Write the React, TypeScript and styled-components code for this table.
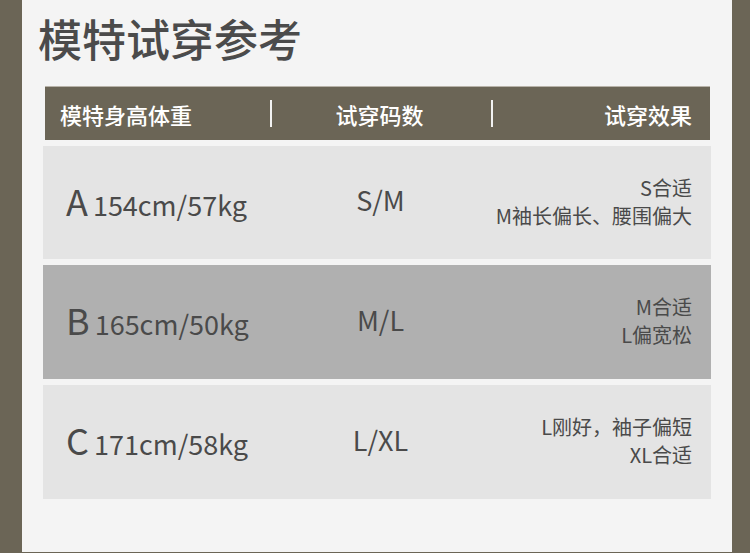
import styled, { createGlobalStyle } from 'styled-components';

// --- Dados da tabela ---
const fitData = [
  { model: 'A', body: '154cm/57kg', size: 'S/M', result: ['S合适', 'M袖长偏长、腰围偏大'], tone: 'light' },
  { model: 'B', body: '165cm/50kg', size: 'M/L', result: ['M合适', 'L偏宽松'], tone: 'dark' },
  { model: 'C', body: '171cm/58kg', size: 'L/XL', result: ['L刚好，袖子偏短', 'XL合适'], tone: 'light' },
] as const;

const FONT = `"Noto Sans CJK SC", "Noto Sans", sans-serif`;

const GlobalStyle = createGlobalStyle`
  html, body {
    margin: 0;
    padding: 0;
    background: #6b6556;
  }
`;

// --- Styled Components ---

const Page = styled.div`
  width: 750px;
  height: 553px;
  box-sizing: border-box;
  padding: 0 18px 1px 22px;
  background: #6b6556;
  font-family: ${FONT};
`;

const Panel = styled.main`
  height: 100%;
  background: #f4f4f4;
  padding: 16px 0 0 21px;
  box-sizing: border-box;
`;

const Title = styled.h1`
  margin: 0 0 0 -5px;
  font-size: 44px;
  line-height: 44px;
  font-weight: 500;
  color: #4b4b4b;
`;

const Table = styled.section`
  width: 668px;
  margin-top: 26px;
  display: flex;
  flex-direction: column;
  gap: 6px;
`;

const HeaderRow = styled.div`
  display: grid;
  grid-template-columns: 225px 2px 219px 2px 1fr;
  align-items: center;
  height: 53px;
  margin: 0 1px 0 2px;
  background: #6b6556;
  border-top: 1px solid #b8b3a9;
  color: #fff;
  font-size: 22px;
  font-weight: 500;
`;

const HeaderCell = styled.div<{ $align: 'left' | 'center' | 'right' }>`
  text-align: ${({ $align }) => $align};
  padding: ${({ $align }) => ($align === 'left' ? '0 0 0 15px' : $align === 'right' ? '0 18px 0 0' : '0 4px 0 0')};
`;

const Divider = styled.span`
  width: 2px;
  height: 27px;
  background: #f2f2f2;
`;

const Row = styled.div<{ $tone: 'light' | 'dark'; $first?: boolean }>`
  display: grid;
  grid-template-columns: 228px 219px 1fr;
  align-items: center;
  height: ${({ $first }) => ($first ? 113 : 114)}px;
  background: ${({ $tone }) => ($tone === 'dark' ? '#b0b0b0' : '#e4e4e4')};
  color: #4a4a4a;
`;

const BodyCell = styled.div`
  padding-left: 23px;
  display: flex;
  align-items: baseline;
  gap: 5px;
  margin-top: -6px;
`;

const ModelLetter = styled.span`
  font-size: 36px;
  line-height: 1;
`;

const Measure = styled.span`
  font-size: 27px;
  line-height: 1;
`;

const SizeCell = styled.div`
  text-align: center;
  font-size: 27px;
  line-height: 1;
  margin-top: -6px;
`;

const ResultCell = styled.div`
  text-align: right;
  padding-right: 19px;
  font-size: 20px;
  line-height: 28px;
  margin-top: -2px;
`;

// --- O Componente ---

export default function App() {
  return (
    <>
      <GlobalStyle />
      <Page>
        <Panel>
          <Title>模特试穿参考</Title>
          <Table>
            <HeaderRow>
              <HeaderCell $align="left">模特身高体重</HeaderCell>
              <Divider />
              <HeaderCell $align="center">试穿码数</HeaderCell>
              <Divider />
              <HeaderCell $align="right">试穿效果</HeaderCell>
            </HeaderRow>
            {fitData.map((row, i) => (
              <Row key={row.model} $tone={row.tone} $first={i === 0}>
                <BodyCell>
                  <ModelLetter>{row.model}</ModelLetter>
                  <Measure>{row.body}</Measure>
                </BodyCell>
                <SizeCell>{row.size}</SizeCell>
                <ResultCell>
                  {row.result.map((line) => (
                    <div key={line}>{line}</div>
                  ))}
                </ResultCell>
              </Row>
            ))}
          </Table>
        </Panel>
      </Page>
    </>
  );
}
